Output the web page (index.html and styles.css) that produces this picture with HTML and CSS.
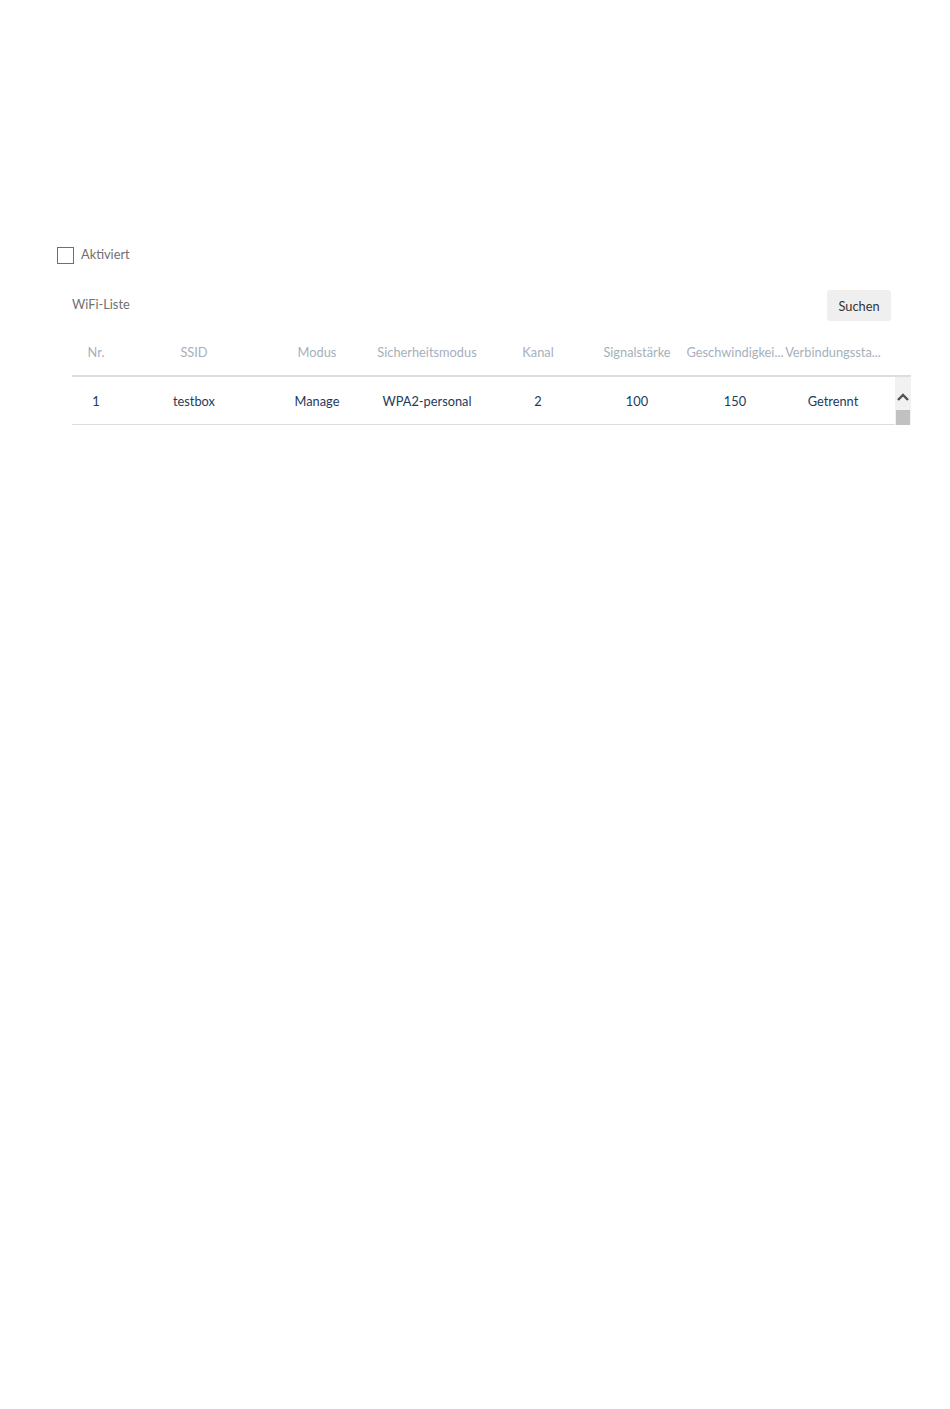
FILE: index.html
```html
<!DOCTYPE html>
<html lang="de">
<head>
    <meta charset="UTF-8">
    <title>WiFi-Liste</title>
    <link rel="stylesheet" href="styles.css">
</head>
<body>
    <div class="page">
        <label class="enable">
            <span class="box"></span>
            <span class="enable-text">Aktiviert</span>
        </label>

        <div class="wifi-list">
            <div class="list-head">
                <span class="list-title">WiFi-Liste</span>
                <button type="button" class="search-button">Suchen</button>
            </div>

            <div class="table">
                <div class="row head">
                    <div>Nr.</div>
                    <div>SSID</div>
                    <div>Modus</div>
                    <div>Sicherheitsmodus</div>
                    <div>Kanal</div>
                    <div>Signalstärke</div>
                    <div title="Geschwindigkeit">Geschwindigkei...</div>
                    <div title="Verbindungsstatus">Verbindungssta...</div>
                </div>
                <div class="body">
                    <div class="rows">
                        <div class="row">
                            <div>1</div>
                            <div>testbox</div>
                            <div>Manage</div>
                            <div>WPA2-personal</div>
                            <div>2</div>
                            <div>100</div>
                            <div>150</div>
                            <div>Getrennt</div>
                        </div>
                    </div>
                    <div class="scrollbar">
                        <svg class="arrow" width="12" height="8" viewBox="0 0 12 8">
                            <path d="M1 7 L6 2 L11 7" fill="none" stroke="#505050" stroke-width="2.4"/>
                        </svg>
                        <div class="thumb"></div>
                    </div>
                </div>
            </div>
        </div>
    </div>
</body>
</html>
```

FILE: styles.css
```css
body {
    margin: 0;
    font-family: Lato, "Open Sans", sans-serif;
    font-size: 12.8px;
    background: #ffffff;
}

.page {
    padding: 247px 39px 0 57px;
}

.enable {
    display: flex;
    align-items: center;
    gap: 7px;
    height: 17px;
    color: #707070;
}

.enable-text {
    margin-bottom: 3px;
}

.box {
    width: 15px;
    height: 15px;
    border: 1px solid #6f6f6f;
}

.wifi-list {
    margin: 26px 0 0 15px;
}

.list-head {
    display: flex;
    justify-content: space-between;
    align-items: center;
    height: 31px;
    padding-right: 20px;
}

.list-title {
    color: #707070;
    margin-bottom: 3px;
}

.search-button {
    height: 31px;
    width: 64px;
    padding: 0;
    border: none;
    border-radius: 3px;
    background-color: #efefef;
    color: #333333;
    font-family: Lato, "Open Sans", sans-serif;
    font-size: 12.8px;
    cursor: pointer;
}

.table {
    margin-top: 7px;
}

.row {
    display: grid;
    grid-template-columns: 48px 148px 98px 122px 100px 98px 98px 98px;
    align-items: center;
    height: 47px;
}

.row div {
    text-align: center;
    white-space: nowrap;
}

.head {
    color: #a6b0bb;
    border-bottom: 2px solid #dddddd;
}

.body {
    display: flex;
}

.rows {
    flex: 1;
}

.rows .row {
    color: #1d3a5c;
    border-bottom: 1px solid #dddddd;
}

.scrollbar {
    width: 16px;
    height: 48px;
    background: #f1f1f1;
    display: flex;
    flex-direction: column;
    align-items: center;
}

.arrow {
    margin-top: 16px;
}

.thumb {
    width: 14px;
    margin-top: 9px;
    flex: 1;
    background: #c1c1c1;
}
```
